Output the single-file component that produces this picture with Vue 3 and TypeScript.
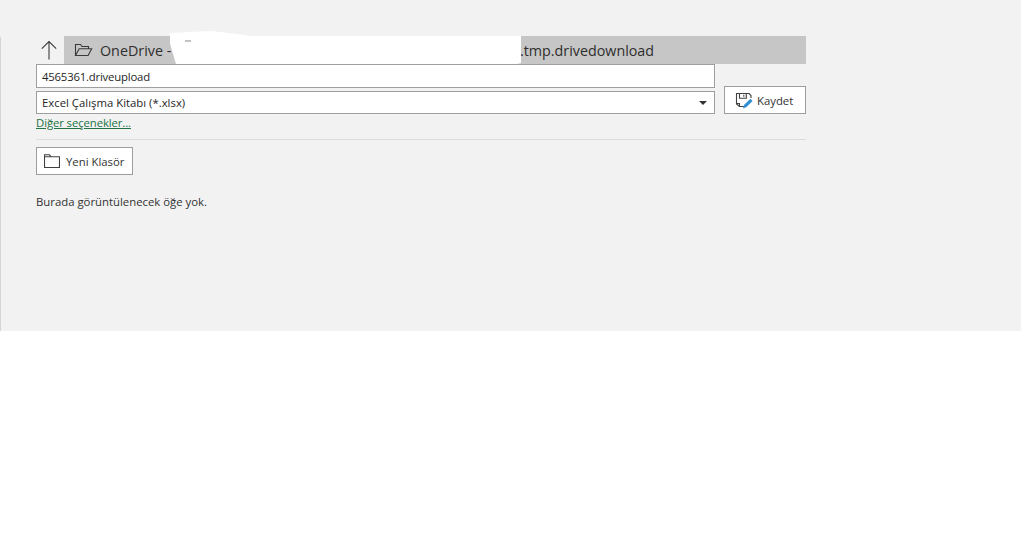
<script setup lang="ts">
const path = 'OneDrive - '
const tail = '.tmp.drivedownload'
</script>

<template>
  <div class="panel">
    <div class="content">
      <div class="nav">
        <button class="up" aria-label="Yukarı">
          <svg width="18" height="20" viewBox="0 0 18 20" fill="none" stroke="#3c3c3c" stroke-width="1.1">
            <path d="M9 19.5V1.5M1.8 8.7 9 1.5l7.2 7.2" />
          </svg>
        </button>
        <div class="crumb">
          <svg class="open-folder" width="19" height="14" viewBox="0 0 19 14" fill="none" stroke="#3a3a3a" stroke-width="1.1">
            <path d="M1.5 12.5V1.5h5l1.6 2h6.4v2.2M1.5 12.5h12.6l3.6-6.8H5.2z" />
          </svg>
          <span class="crumb-head">{{ path }}</span>
          <span class="crumb-tail">{{ tail }}</span>
        </div>
      </div>

      <div class="form">
        <div class="fields">
          <div class="field name">4565361.driveupload</div>
          <div class="field type">
            <span>Excel Çalışma Kitabı (*.xlsx)</span>
            <i class="caret"></i>
          </div>
        </div>
        <button class="btn save">
          <svg width="18" height="17" viewBox="0 0 18 17" fill="none">
            <path d="M10.5 14.5H4.5L1.5 12V1.5h12.5l2 2v2.5M4.5 14.5v-3h-3M4.5 1.5v4.8h6.8V1.5M8.8 2.8v2" stroke="#404040" stroke-width="1.1" />
            <path d="M8 16.5l1-3.4 6.4-6.4 2.2 2.2-6.4 6.4z" fill="#2f8fd0" />
          </svg>
          <span>Kaydet</span>
        </button>
      </div>

      <a class="more" href="#">Diğer seçenekler...</a>
      <div class="rule"></div>

      <button class="btn new-folder">
        <svg width="16" height="14" viewBox="0 0 16 14" fill="none" stroke="#404040" stroke-width="1.1">
          <path d="M.5 13.5V.8h5l1.5 2h8.5v10.7zM.5 2.8h6.5" />
        </svg>
        <span>Yeni Klasör</span>
      </button>

      <p class="empty">Burada görüntülenecek öğe yok.</p>
    </div>

    <svg class="scribble" width="360" height="36" viewBox="0 0 360 36">
      <path d="M0 2 42 0 82 5H351V32L347 33H6L0 13z" fill="#fff" />
      <rect x="15" y="9" width="6" height="2" fill="#c4c4c4" />
    </svg>
  </div>
</template>

<style>
html,
body {
  background: #fff;
}
</style>

<style scoped>
.panel {
  position: relative;
  height: 331px;
  background: #f2f2f2;
  font-family: "Open Sans", "Noto Sans", sans-serif;
  font-size: 11.35px;
  color: #333;
  overflow: hidden;
}
.panel::before {
  content: "";
  position: absolute;
  left: 0;
  top: 37px;
  bottom: 0;
  width: 1px;
  background: #d6d6d6;
}
.content {
  width: 770px;
  margin-left: 36px;
  padding-top: 36px;
}
.nav {
  display: flex;
  height: 28px;
}
.up {
  width: 26px;
  padding: 0;
  border: 0;
  background: none;
  display: flex;
  align-items: center;
  justify-content: center;
  margin: 0 2px 0 0;
}
.crumb {
  flex: 1;
  display: flex;
  align-items: center;
  background: #c6c6c6;
  padding-left: 10px;
  font-size: 14.3px;
  color: #2e2e2e;
}
.open-folder {
  margin-right: 7px;
}
.crumb-head {
  white-space: pre;
  width: 420px;
}
.form {
  display: flex;
  justify-content: space-between;
  align-items: flex-end;
}
.fields {
  width: 679px;
  display: flex;
  flex-direction: column;
  gap: 3px;
}
.field {
  box-sizing: border-box;
  border: 1px solid #9e9e9e;
  background: #fff;
  padding: 0 5px;
  display: flex;
  align-items: center;
  justify-content: space-between;
  color: #262626;
}
.name {
  height: 24px;
  padding-top: 1px;
  letter-spacing: -0.2px;
}
.type {
  height: 23px;
}
.caret {
  width: 0;
  height: 0;
  border-left: 4px solid transparent;
  border-right: 4px solid transparent;
  border-top: 4px solid #333;
  margin-right: 2px;
}
.btn {
  box-sizing: border-box;
  display: flex;
  align-items: center;
  height: 28px;
  background: #fff;
  border: 1px solid #9e9e9e;
  font: inherit;
  color: #333;
  padding: 0;
}
.save {
  width: 82px;
  padding-left: 10px;
  gap: 4px;
}
.more {
  display: block;
  height: 25px;
  line-height: 17px;
  letter-spacing: -0.1px;
  color: #217346;
  text-decoration: underline;
}
.rule {
  height: 1px;
  background: #dcdcdc;
}
.new-folder {
  width: 97px;
  margin-top: 7px;
  padding-left: 7px;
  gap: 6px;
}
.empty {
  margin: 18px 0 0;
  line-height: 17px;
}
.scribble {
  position: absolute;
  left: 170px;
  top: 31px;
}
</style>
